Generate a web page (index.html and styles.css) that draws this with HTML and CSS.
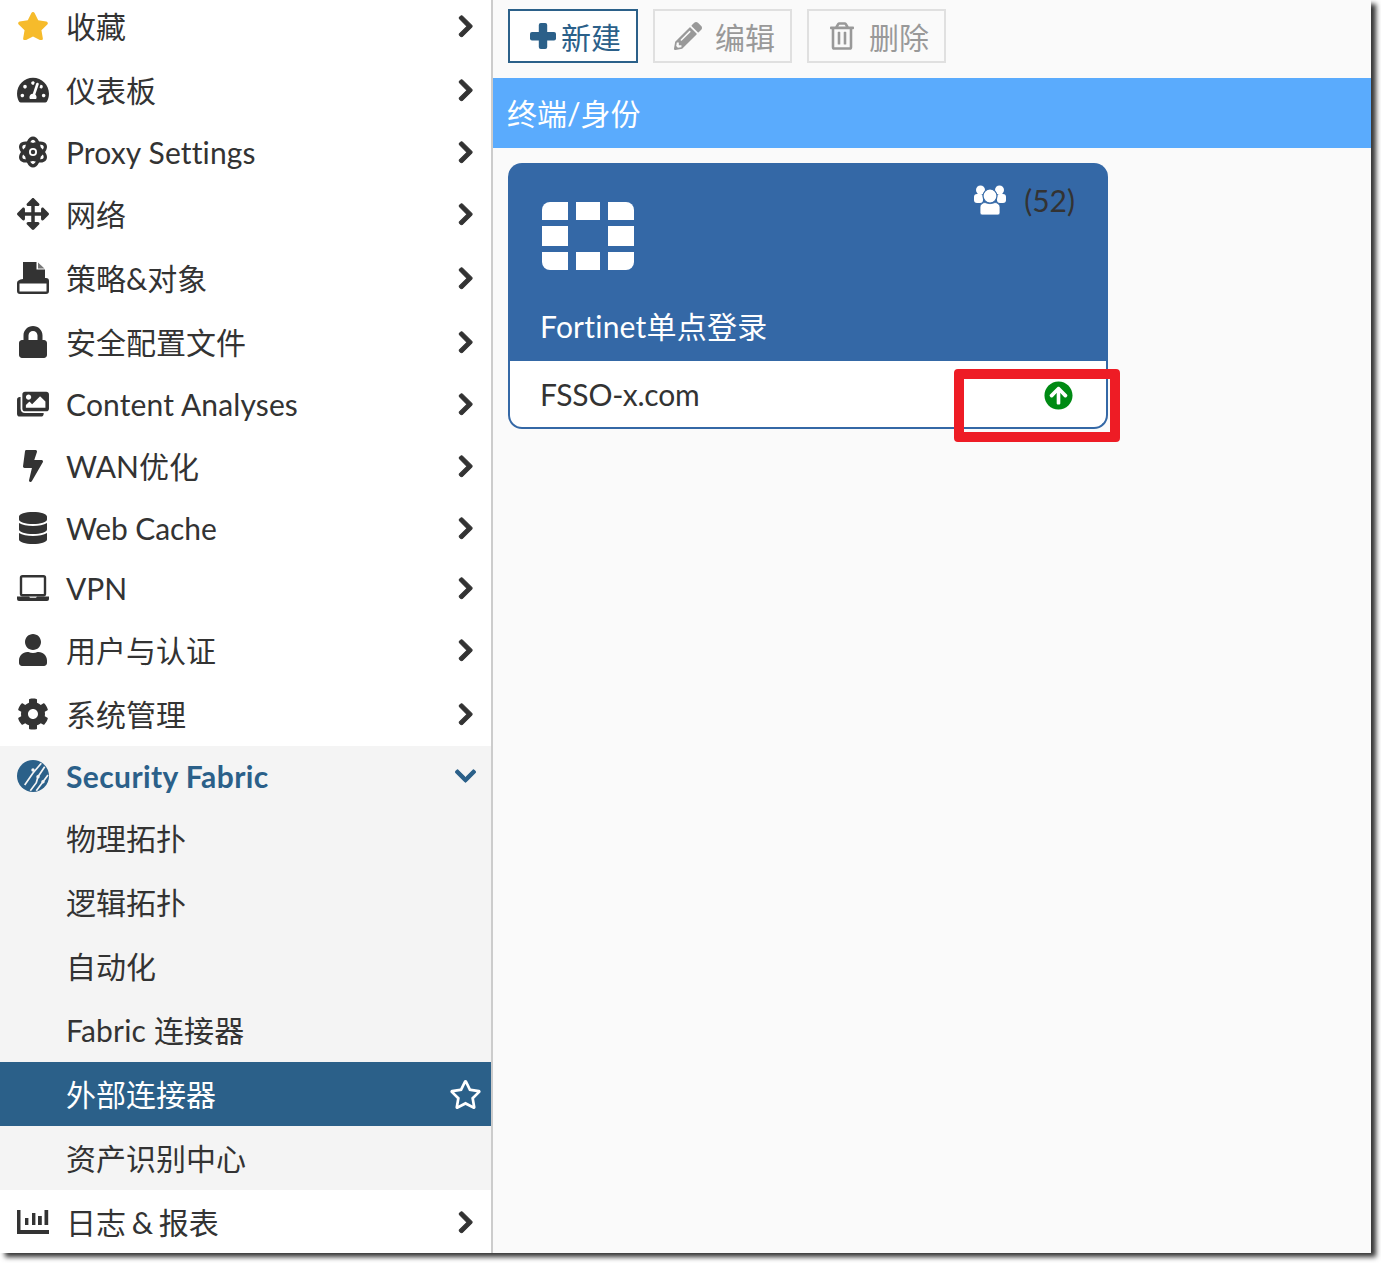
FILE: index.html
```html
<!DOCTYPE html>
<html lang="zh">
<head>
<meta charset="utf-8">
<title>外部连接器</title>
<link rel="stylesheet" href="styles.css">
</head>
<body>
<div class="window">
  <aside class="sidebar">
    <nav class="menu">
      <a class="row"><span class="ico"><svg class="i-star" viewBox="0 0 576 512"><path fill="#f6bb2b" d="M259.3 17.8L194 150.2 47.9 171.5c-26.2 3.8-36.7 36.1-17.7 54.6l105.7 103-25 145.5c-4.5 26.3 23.2 46 46.4 33.7L288 439.6l130.7 68.7c23.2 12.2 50.9-7.4 46.4-33.7l-25-145.5 105.7-103c19-18.5 8.5-50.8-17.7-54.6L382 150.2 316.7 17.8c-11.7-23.6-45.6-23.9-57.4 0z"/></svg></span><span class="label">收藏</span><svg class="chev" viewBox="0 0 320 512"><use href="#c-right"/></svg></a>
      <a class="row"><span class="ico"><svg class="i-wide" viewBox="0 0 576 512"><path d="M288 32C128.94 32 0 160.94 0 320c0 52.8 14.25 102.26 39.06 144.8 5.61 9.62 16.3 15.2 27.44 15.2h443c11.14 0 21.83-5.58 27.44-15.2C561.75 422.26 576 372.8 576 320c0-159.06-128.94-288-288-288zm0 64c14.71 0 26.58 10.13 30.32 23.65-1.11 2.26-2.64 4.23-3.45 6.67l-9.22 27.67c-5.13 3.49-10.97 6.01-17.64 6.01-17.67 0-32-14.33-32-32S270.33 96 288 96zM96 384c-17.67 0-32-14.33-32-32s14.33-32 32-32 32 14.33 32 32-14.33 32-32 32zm48-160c-17.67 0-32-14.33-32-32s14.33-32 32-32 32 14.33 32 32-14.33 32-32 32zm246.77-72.41l-61.33 184C343.13 347.33 352 364.54 352 384c0 11.72-3.38 22.55-8.88 32H232.88c-5.5-9.45-8.88-20.28-8.88-32 0-33.94 26.5-61.43 59.9-63.59l61.34-184.01c4.17-12.56 17.73-19.45 30.36-15.17 12.57 4.19 19.35 17.79 15.17 30.36zm14.66 57.2l15.52-46.55c3.47-1.29 7.13-2.23 11.05-2.23 17.67 0 32 14.33 32 32s-14.33 32-32 32c-11.38-.01-20.89-6.28-26.57-15.22zM480 384c-17.67 0-32-14.33-32-32s14.33-32 32-32 32 14.33 32 32-14.33 32-32 32z"/></svg></span><span class="label">仪表板</span><svg class="chev" viewBox="0 0 320 512"><use href="#c-right"/></svg></a>
      <a class="row row-latin"><span class="ico"><svg class="i-full" viewBox="0 0 32 32"><g fill="none" stroke="#333" stroke-width="3.2"><ellipse cx="16" cy="16" rx="6.5" ry="13.8"/><ellipse cx="16" cy="16" rx="6.5" ry="13.8" transform="rotate(60 16 16)"/><ellipse cx="16" cy="16" rx="6.5" ry="13.8" transform="rotate(120 16 16)"/></g><circle cx="16" cy="16" r="6.5" fill="#333"/><circle cx="16" cy="16" r="4" fill="#fff"/><circle cx="16" cy="16" r="2.2" fill="#333"/></svg></span><span class="label ls-wide">Proxy Settings</span><svg class="chev" viewBox="0 0 320 512"><use href="#c-right"/></svg></a>
      <a class="row"><span class="ico"><svg class="i-full" viewBox="0 0 512 512"><path d="M352.201 425.775l-79.196 79.196c-9.373 9.373-24.568 9.373-33.941 0l-79.196-79.196c-15.119-15.119-4.411-40.971 16.971-40.97h51.162L228 284H127.196v51.162c0 21.382-25.851 32.09-40.971 16.971L7.029 272.937c-9.373-9.373-9.373-24.569 0-33.941L86.225 159.8c15.119-15.119 40.971-4.411 40.971 16.971V228H228V127.196h-51.23c-21.382 0-32.09-25.851-16.971-40.971l79.196-79.196c9.373-9.373 24.568-9.373 33.941 0l79.196 79.196c15.119 15.119 4.411 40.971-16.971 40.971h-51.162V228h100.804v-51.162c0-21.382 25.851-32.09 40.97-16.971l79.196 79.196c9.373 9.373 9.373 24.569 0 33.941L425.773 352.2c-15.119 15.119-40.971 4.411-40.97-16.971V284H284v100.804h51.23c21.382 0 32.09 25.851 16.971 40.971z"/></svg></span><span class="label">网络</span><svg class="chev" viewBox="0 0 320 512"><use href="#c-right"/></svg></a>
      <a class="row"><span class="ico"><svg class="i-full" viewBox="0 0 32 32"><path fill-rule="evenodd" d="M6 0H19.500V7.500H28V16H29A3 3 0 0 1 32 19V29A3 3 0 0 1 29 32H3A3 3 0 0 1 0 29V21C0 19 2 17.500 6 17ZM2.500 21.500V29.500H29.500V21.500Z"/><path fill="#777" d="M21 .5L27.500 6.500H21Z"/></svg></span><span class="label">策略&amp;对象</span><svg class="chev" viewBox="0 0 320 512"><use href="#c-right"/></svg></a>
      <a class="row"><span class="ico"><svg class="i-full" viewBox="0 0 448 512"><path d="M400 224h-24v-72C376 68.2 307.8 0 224 0S72 68.2 72 152v72H48c-26.5 0-48 21.5-48 48v192c0 26.5 21.5 48 48 48h352c26.5 0 48-21.500 48-48V272c0-26.500-21.500-48-48-48zm-104 0H152v-72c0-39.700 32.300-72 72-72s72 32.300 72 72v72z"/></svg></span><span class="label">安全配置文件</span><svg class="chev" viewBox="0 0 320 512"><use href="#c-right"/></svg></a>
      <a class="row row-latin"><span class="ico"><svg class="i-wide" viewBox="0 0 576 512"><path d="M480 416v16c0 26.51-21.49 48-48 48H48c-26.51 0-48-21.49-48-48V176c0-26.51 21.49-48 48-48h16v208c0 44.112 35.888 80 80 80h336zm96-80V80c0-26.51-21.49-48-48-48H144c-26.51 0-48 21.49-48 48v256c0 26.51 21.49 48 48 48h384c26.51 0 48-21.49 48-48zM256 128c0 26.51-21.49 48-48 48s-48-21.49-48-48 21.49-48 48-48 48 21.49 48 48zm-96 144l55.515-55.515c4.686-4.686 12.284-4.686 16.971 0L272 256l135.515-135.515c4.686-4.686 12.284-4.686 16.971 0L512 208v112H160v-48z"/></svg></span><span class="label ls-wide">Content Analyses</span><svg class="chev" viewBox="0 0 320 512"><use href="#c-right"/></svg></a>
      <a class="row"><span class="ico"><svg class="i-full" viewBox="0 0 320 512"><path d="M296 160H180.600l42.600-129.800C227.200 15 215.700 0 200 0H56C44 0 33.800 8.900 32.200 20.800l-32 240C-1.700 275.200 9.500 288 24 288h118.700L96.600 482.500c-3.600 15.200 8 29.500 23.300 29.500 8.400 0 16.400-4.400 20.800-12l176-304c9.300-15.900-2.200-36-20.700-36z"/></svg></span><span class="label">WAN优化</span><svg class="chev" viewBox="0 0 320 512"><use href="#c-right"/></svg></a>
      <a class="row row-latin"><span class="ico"><svg class="i-full" viewBox="0 0 448 512"><path d="M448 73.143v45.714C448 159.143 347.667 192 224 192S0 159.143 0 118.857V73.143C0 32.857 100.333 0 224 0s224 32.857 224 73.143zM448 176v102.857C448 319.143 347.667 352 224 352S0 319.143 0 278.857V176c48.125 33.143 136.208 48.572 224 48.572S399.874 209.143 448 176zm0 160v102.857C448 479.143 347.667 512 224 512S0 479.143 0 438.857V336c48.125 33.143 136.208 48.572 224 48.572S399.874 369.143 448 336z"/></svg></span><span class="label ls-tight">Web Cache</span><svg class="chev" viewBox="0 0 320 512"><use href="#c-right"/></svg></a>
      <a class="row row-latin"><span class="ico"><svg class="i-laptop" viewBox="0 0 32 26"><rect x="4" y="1.200" width="24" height="19" rx="1.500" fill="none" stroke="#333" stroke-width="2.400"/><path d="M0 21.500h12l1 1.200h6l1-1.200h12V24a2 2 0 0 1-2 2H2a2 2 0 0 1-2-2z"/></svg></span><span class="label">VPN</span><svg class="chev" viewBox="0 0 320 512"><use href="#c-right"/></svg></a>
      <a class="row"><span class="ico"><svg class="i-full" viewBox="0 0 448 512"><path d="M224 256c70.700 0 128-57.300 128-128S294.700 0 224 0 96 57.300 96 128s57.300 128 128 128zm89.600 32h-16.700c-22.200 10.200-46.900 16-72.900 16s-50.600-5.800-72.900-16h-16.700C60.200 288 0 348.200 0 422.400V464c0 26.500 21.500 48 48 48h352c26.500 0 48-21.500 48-48v-41.600c0-74.200-60.200-134.400-134.400-134.400z"/></svg></span><span class="label">用户与认证</span><svg class="chev" viewBox="0 0 320 512"><use href="#c-right"/></svg></a>
      <a class="row"><span class="ico"><svg class="i-full" viewBox="0 0 512 512"><path d="M487.400 315.700l-42.600-24.600c4.300-23.200 4.300-47 0-70.200l42.600-24.600c4.900-2.800 7.100-8.600 5.500-14-11.100-35.600-30-67.800-54.700-94.600-3.800-4.100-10-5.100-14.800-2.300L380.800 110c-17.900-15.400-38.500-27.300-60.800-35.100V25.800c0-5.600-3.900-10.500-9.400-11.700-36.700-8.200-74.300-7.800-109.200 0-5.500 1.200-9.400 6.100-9.400 11.700V75c-22.200 7.900-42.800 19.800-60.800 35.100L88.700 85.500c-4.900-2.800-11-1.900-14.800 2.300-24.700 26.700-43.600 58.900-54.700 94.600-1.700 5.400.6 11.200 5.500 14L67.300 221c-4.300 23.200-4.300 47 0 70.200l-42.600 24.600c-4.900 2.800-7.100 8.600-5.500 14 11.100 35.600 30 67.800 54.700 94.600 3.800 4.100 10 5.100 14.800 2.300l42.600-24.600c17.900 15.400 38.500 27.300 60.800 35.100v49.200c0 5.600 3.900 10.500 9.400 11.700 36.700 8.200 74.300 7.800 109.200 0 5.500-1.200 9.400-6.100 9.400-11.700v-49.200c22.200-7.900 42.800-19.800 60.800-35.100l42.600 24.600c4.900 2.800 11 1.900 14.800-2.300 24.700-26.700 43.600-58.900 54.700-94.600 1.500-5.500-.7-11.300-5.600-14.100zM256 336c-44.100 0-80-35.900-80-80s35.900-80 80-80 80 35.900 80 80-35.900 80-80 80z"/></svg></span><span class="label">系统管理</span><svg class="chev" viewBox="0 0 320 512"><use href="#c-right"/></svg></a>
      <div class="group">
        <a class="row row-latin row-open"><span class="ico"><svg class="i-full" viewBox="0 0 32 32"><circle cx="16" cy="16" r="16" fill="#2b6089"/><g fill="none" stroke="#f4f4f4" stroke-width="1.700"><path d="M7.700 25L16 13l8.300-9.700"/><path d="M13.300 30.700l6-8 1.700-6 6.700-10"/><path d="M19.300 30.700l6.700-9 5-6.700"/></g><g fill="#f4f4f4"><circle cx="16" cy="10" r="1.700"/><circle cx="21" cy="16.700" r="1.700"/><circle cx="26" cy="21.700" r="1.700"/></g></svg></span><span class="label label-strong">Security Fabric</span><svg class="chev-down" viewBox="0 0 448 512"><path fill="#2b6089" stroke="#2b6089" stroke-width="20" d="M207.029 381.476L12.686 187.132c-9.373-9.373-9.373-24.569 0-33.941l22.667-22.667c9.357-9.357 24.522-9.375 33.901-.04L224 284.505l154.745-154.021c9.379-9.335 24.544-9.317 33.901.04l22.667 22.667c9.373 9.373 9.373 24.569 0 33.941L240.971 381.476c-9.373 9.372-24.569 9.372-33.942 0z"/></svg></a>
        <a class="row sub"><span class="label">物理拓扑</span></a>
        <a class="row sub"><span class="label">逻辑拓扑</span></a>
        <a class="row sub"><span class="label">自动化</span></a>
        <a class="row sub"><span class="label ls-fabric">Fabric 连接器</span></a>
        <a class="row sub active"><span class="label">外部连接器</span><svg class="star-outline" viewBox="0 0 576 512"><path fill="#fff" d="M528.100 171.500L382 150.200 316.700 17.800c-11.700-23.600-45.600-23.900-57.400 0L194 150.200 47.900 171.500c-26.200 3.800-36.700 36.100-17.700 54.600l105.700 103-25 145.500c-4.500 26.300 23.200 46 46.400 33.700L288 439.600l130.700 68.700c23.200 12.200 50.900-7.400 46.400-33.700l-25-145.500 105.700-103c19-18.500 8.500-50.800-17.700-54.600zM388.600 312.300l23.700 138.400L288 385.400l-124.300 65.300 23.700-138.400-100.600-98 139-20.200 62.200-126 62.200 126 139 20.200-100.600 98z"/></svg></a>
        <a class="row sub"><span class="label">资产识别中心</span></a>
      </div>
      <a class="row"><span class="ico"><svg class="i-chart" viewBox="0 0 32 24"><path d="M0 0h3.500v20H32v4H0z"/><rect x="8" y="8" width="3.400" height="7"/><rect x="15" y="3" width="3.400" height="12"/><rect x="21" y="6" width="3.800" height="9"/><rect x="27.500" y="0" width="3.700" height="15"/></svg></span><span class="label ws-tight">日志 &amp; 报表</span><svg class="chev" viewBox="0 0 320 512"><use href="#c-right"/></svg></a>
    </nav>
  </aside>
  <main class="main">
    <div class="toolbar">
      <button class="btn btn-new"><svg class="b-plus" viewBox="0 0 26 26"><rect y="9" width="26" height="8.400" rx="2" fill="#2b6089"/><rect x="8.800" width="8.400" height="26" rx="2" fill="#2b6089"/></svg>新建</button>
      <button class="btn btn-off btn-edit"><svg class="b-pencil" viewBox="0 0 512 512"><path fill="#999" d="M497.900 142.100l-46.100 46.100c-4.700 4.700-12.300 4.700-17 0l-111-111c-4.700-4.700-4.700-12.300 0-17l46.100-46.100c18.700-18.700 49.100-18.700 67.900 0l60.100 60.100c18.800 18.700 18.800 49.100 0 67.900zM284.200 99.800L21.600 362.400.4 483.900c-2.900 16.400 11.400 30.600 27.800 27.800l121.500-21.300 262.600-262.600c4.700-4.700 4.700-12.300 0-17l-111-111c-4.800-4.700-12.400-4.700-17.100 0zM124.100 339.900c-5.500-5.500-5.500-14.300 0-19.800l154-154c5.500-5.500 14.300-5.500 19.800 0s5.500 14.300 0 19.800l-154 154c-5.500 5.500-14.300 5.500-19.800 0zM88 424h48v36.300l-64.500 11.300-31.100-31.100L51.700 376H88v48z"/></svg>编辑</button>
      <button class="btn btn-off btn-del"><svg class="b-trash" viewBox="0 0 448 512"><path fill="#999" d="M268 416h24a12 12 0 0 0 12-12V188a12 12 0 0 0-12-12h-24a12 12 0 0 0-12 12v216a12 12 0 0 0 12 12zM432 80h-82.410l-34-56.700A48 48 0 0 0 274.410 0H173.590a48 48 0 0 0-41.160 23.300L98.410 80H16A16 16 0 0 0 0 96v16a16 16 0 0 0 16 16h16v336a48 48 0 0 0 48 48h288a48 48 0 0 0 48-48V128h16a16 16 0 0 0 16-16V96a16 16 0 0 0-16-16zM171.840 50.910A6 6 0 0 1 177 48h94a6 6 0 0 1 5.150 2.910L293.610 80H154.390zM368 464H80V128h288zm-212-48h24a12 12 0 0 0 12-12V188a12 12 0 0 0-12-12h-24a12 12 0 0 0-12 12v216a12 12 0 0 0 12 12z"/></svg>删除</button>
    </div>
    <div class="band">终端/身份</div>
    <section class="card">
      <div class="card-head">
        <div class="card-top">
          <svg class="logo" viewBox="0 0 92 68"><g fill="#fff"><path d="M0 18V8a8 8 0 0 1 8-8h18v18z"/><rect x="34" width="24" height="18"/><path d="M66 0h18a8 8 0 0 1 8 8v10H66z"/><rect y="24" width="26" height="20"/><rect x="66" y="24" width="26" height="20"/><path d="M0 50h26v18H8a8 8 0 0 1-8-8z"/><rect x="34" y="50" width="24" height="18"/><path d="M66 50h26v10a8 8 0 0 1-8 8H66z"/></g></svg>
          <div class="count"><svg class="users" viewBox="0 0 32 30"><g fill="#fff"><circle cx="6.500" cy="5" r="4.500"/><circle cx="25.500" cy="5" r="4.500"/><rect x="0" y="9" width="9" height="9" rx="3"/><rect x="23" y="9" width="9" height="9" rx="3"/></g><circle cx="16" cy="11" r="7" fill="#fff" stroke="#3468a6" stroke-width="1.200"/><path d="M6 28v-6c0-2.500 3-4.500 5-4.500 3 1.500 7 1.500 10 0 2 0 5 2 5 4.500v6a2 2 0 0 1-2 2H8a2 2 0 0 1-2-2z" fill="#fff" stroke="#3468a6" stroke-width=".8"/></svg>(52)</div>
        </div>
        <div class="card-title">Fortinet单点登录</div>
      </div>
      <div class="card-body">
        <span class="host">FSSO-x.com</span>
        <svg class="up" viewBox="0 0 512 512"><circle cx="256" cy="256" r="220" fill="#fff"/><path fill="#008a14" d="M8 256C8 119 119 8 256 8s248 111 248 248-111 248-248 248S8 393 8 256zm143.600 28.900l72.400-75.500V392c0 13.300 10.700 24 24 24h16c13.300 0 24-10.700 24-24V209.400l72.400 75.500c9.300 9.700 24.800 9.900 34.300.4l10.900-11c9.400-9.400 9.400-24.600 0-33.900L273 107.700c-9.400-9.400-24.600-9.400-33.900 0L106.300 240.400c-9.400 9.400-9.400 24.600 0 33.900l10.900 11c9.600 9.500 25.100 9.300 34.400-.4z"/><path fill="none" stroke="#fff" stroke-width="44" d="M256 405V140M140 262L256 140 372 262"/></svg>
      </div>
    </section>
  </main>
  <div class="callout"></div>
</div>
<svg class="defs" aria-hidden="true"><defs><path id="c-right" d="M285.476 272.971L91.132 467.314c-9.373 9.373-24.569 9.373-33.941 0l-22.667-22.667c-9.357-9.357-9.375-24.522-.04-33.901L188.505 256 34.484 101.255c-9.335-9.379-9.317-24.544.04-33.901l22.667-22.667c9.373-9.373 24.569-9.373 33.941 0L285.475 239.030c9.373 9.372 9.373 24.568.001 33.941z"/></defs></svg>
</body>
</html>
```

FILE: styles.css
```css
* { box-sizing: border-box; }
html, body { margin: 0; height: 100%; background: #fff; overflow: hidden; }
body {
  font-family: Lato, "Noto Sans CJK SC", "Liberation Sans", sans-serif;
  font-size: 30px;
  color: #333;
}
.defs { position: absolute; width: 0; height: 0; }
.window {
  position: relative;
  display: flex;
  width: 1371px;
  height: 1253px;
  background: #fafafa;
  box-shadow: 5px 4px 5px rgba(0, 0, 0, .8);
}
.sidebar {
  flex: none;
  width: 493px;
  height: 100%;
  background: #fff;
  border-right: 2px solid #ccc;
  overflow: hidden;
}
.menu { margin-top: -6px; }
.row {
  display: flex;
  align-items: center;
  height: 64px;
  padding-left: 17px;
  padding-right: 18px;
}
.row-latin { height: 60px; }
.ico {
  flex: none;
  display: flex;
  align-items: center;
  justify-content: center;
  width: 32px;
  margin-right: 17px;
}
.ico svg { display: block; fill: #333; }
.i-star, .i-wide { width: 32px; height: 28.4px; }
.i-full { height: 32px; }
.i-chart { width: 32px; height: 24px; }
.i-laptop { width: 32px; height: 26px; }
.label { flex: 1; line-height: 36px; white-space: nowrap; }
.label-strong { color: #2b6089; font-weight: 700; letter-spacing: .4px; }
.ls-wide { letter-spacing: .14px; }
.ls-tight { letter-spacing: -.1px; }
.ls-fabric { letter-spacing: .18px; }
.ws-tight { word-spacing: -2px; }
.chev { flex: none; width: 15.4px; height: 24.6px; fill: #333; stroke: #333; stroke-width: 22px; }
.row-open { padding-right: 15px; }
.chev-down { flex: none; width: 21px; height: 24px; }
.group { background: #f4f4f4; }
.sub { padding-left: 66px; }
.active { background: #2b6089; color: #fff; padding-right: 9px; }
.star-outline { flex: none; width: 33px; height: 29px; }
.main { flex: 1; min-width: 0; }
.toolbar {
  display: flex;
  gap: 15px;
  height: 78px;
  padding: 9px 15px;
}
.btn {
  display: flex;
  align-items: center;
  height: 54px;
  padding: 0 15px 0 0;
  border: 2px solid #e0e0e0;
  background: transparent;
  font: inherit;
  color: #999;
}
.btn-new { padding-left: 20px; border-color: #2b6089; color: #2b6089; background: #fff; }
.btn-edit { padding-left: 19px; }
.btn-del { padding-left: 21px; }
.b-plus { width: 26px; height: 26px; margin-right: 5px; }
.b-pencil { width: 28px; height: 28px; margin-right: 13px; }
.b-trash { width: 24px; height: 28px; margin-right: 15px; }
.band {
  display: flex;
  align-items: center;
  height: 70px;
  padding: 0 0 2px 14px;
  background: #5aabfd;
  color: #fff;
}
.card {
  width: 600px;
  height: 266px;
  margin: 15px 0 0 15px;
}
.card-head {
  height: 198px;
  padding: 19px 33px 0 32px;
  background: #3468a6;
  border-radius: 14px 14px 0 0;
  color: #fff;
}
.card-top { display: flex; justify-content: space-between; align-items: flex-start; }
.logo { display: block; width: 92px; height: 68px; margin: 20px 0 0 2px; }
.count { display: flex; align-items: center; gap: 18px; color: #333; line-height: 36px; }
.users { width: 32px; height: 30px; }
.card-title { margin-top: 38px; line-height: 36px; letter-spacing: .22px; }
.card-body {
  display: flex;
  align-items: center;
  justify-content: space-between;
  height: 68px;
  padding: 0 33.5px 0 30px;
  background: #fff;
  border: 2px solid #3468a6;
  border-top: 0;
  border-radius: 0 0 14px 14px;
}
.host { letter-spacing: -.2px; }
.up { width: 29px; height: 29px; margin-top: 3px; }
.callout {
  position: absolute;
  left: 954px;
  top: 369px;
  width: 166px;
  height: 73px;
  border: 10px solid #ee1c25;
  border-radius: 4px;
}
```
